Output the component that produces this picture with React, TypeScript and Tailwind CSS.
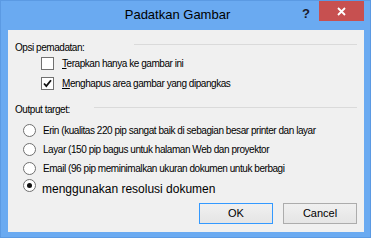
import React from 'react';

const small = "font-['Liberation_Sans',Arial,sans-serif] text-[10px] leading-[13px] tracking-[-0.45px]";

function Checkbox({ checked }: { checked?: boolean }) {
  return (
    <div className="flex h-[13px] w-[13px] shrink-0 items-center justify-center border border-[#707070] bg-white">
      {checked && (
        <svg width="9" height="9" viewBox="0 0 9 9">
          <polyline points="1,4.5 3.3,7 8,1.2" fill="none" stroke="#111" strokeWidth="1.8" />
        </svg>
      )}
    </div>
  );
}

function Radio({ checked }: { checked?: boolean }) {
  return (
    <div className="flex h-[13px] w-[13px] shrink-0 items-center justify-center rounded-full border border-[#707070] bg-white">
      {checked && <div className="h-[5px] w-[5px] rounded-full bg-[#111]"></div>}
    </div>
  );
}

function Button({ label, primary }: { label: string; primary?: boolean }) {
  return (
    <div
      className={
        'flex h-[21px] w-[74px] items-center justify-center border bg-gradient-to-b from-[#f0f0f0] to-[#e5e5e5] text-[11px] text-black ' +
        (primary ? 'border-[#3399ff]' : 'border-[#acacac]')
      }
    >
      {label}
    </div>
  );
}

export default function App() {
  const radios = [
    'Erin (kualitas 220 pip sangat baik di sebagian besar printer dan layar',
    'Layar (150 pip bagus untuk halaman Web dan proyektor',
    'Email (96 pip meminimalkan ukuran dokumen untuk berbagi',
  ];

  return (
    <div className="h-[240px] w-[371px] bg-white font-['Liberation_Sans',Arial,sans-serif]">
      <div className="flex h-[238px] w-[371px] flex-col border border-[#5b9ae3] bg-[#6aaaf1] pb-[5px]">
        {/* Title bar */}
        <div className="flex h-[29px] shrink-0">
          <div className="flex-1 pl-[58px] pt-[6px] text-center text-[13px] leading-[16px] text-black">
            Padatkan Gambar
          </div>
          <div className="w-[20px] pt-[5px] text-center text-[13px] font-bold leading-[16px] text-[#1b1b2b]">?</div>
          <div className="ml-[3px] mr-[6px] flex h-[20px] w-[45px] items-center justify-center bg-[#c75050]">
            <svg width="9" height="9" viewBox="0 0 9 9">
              <path d="M1 1 L8 8 M8 1 L1 8" stroke="#fff" strokeWidth="1.8" />
            </svg>
          </div>
        </div>

        {/* Client area */}
        <div className="ml-[7px] mr-[6px] flex flex-1 flex-col bg-[#f0f0f0] text-black">
          <div className={'mt-[11px] flex h-[13px] items-start pl-[7px] pr-[7px] ' + small}>
            <span>Opsi pemadatan:</span>
            <div className="ml-[50px] mt-[3px] h-px flex-1 bg-[#dadada]"></div>
          </div>

          <div className={'ml-[33px] mt-[3px] flex items-center gap-[8px] ' + small}>
            <Checkbox />
            <span>
              <span className="underline">T</span>erapkan hanya ke gambar ini
            </span>
          </div>
          <div className={'ml-[33px] mt-[7px] flex items-center gap-[8px] ' + small}>
            <Checkbox checked />
            <span>
              <span className="underline">M</span>enghapus area gambar yang dipangkas
            </span>
          </div>

          <div className={'mt-[13px] flex h-[13px] items-start pl-[7px] pr-[7px] ' + small}>
            <span>Output target:</span>
            <div className="ml-[24px] mt-[4px] h-px flex-1 bg-[#dadada]"></div>
          </div>

          <div className="mt-[8px] flex flex-col gap-[6px] pl-[15px]">
            {radios.map((r) => (
              <div key={r} className={'flex items-center gap-[7px] whitespace-nowrap ' + small}>
                <Radio />
                <span>{r}</span>
              </div>
            ))}
          </div>

          <div className="mt-[4px] flex items-start gap-[6px] pl-[15px]">
            <Radio checked />
            <span className="mt-[3px] text-[12px] leading-[15px]">menggunakan resolusi dokumen</span>
          </div>

          <div className="mt-[6px] flex justify-end gap-[10px] pr-[7px]">
            <Button label="OK" primary />
            <Button label="Cancel" />
          </div>
        </div>
      </div>
    </div>
  );
}
